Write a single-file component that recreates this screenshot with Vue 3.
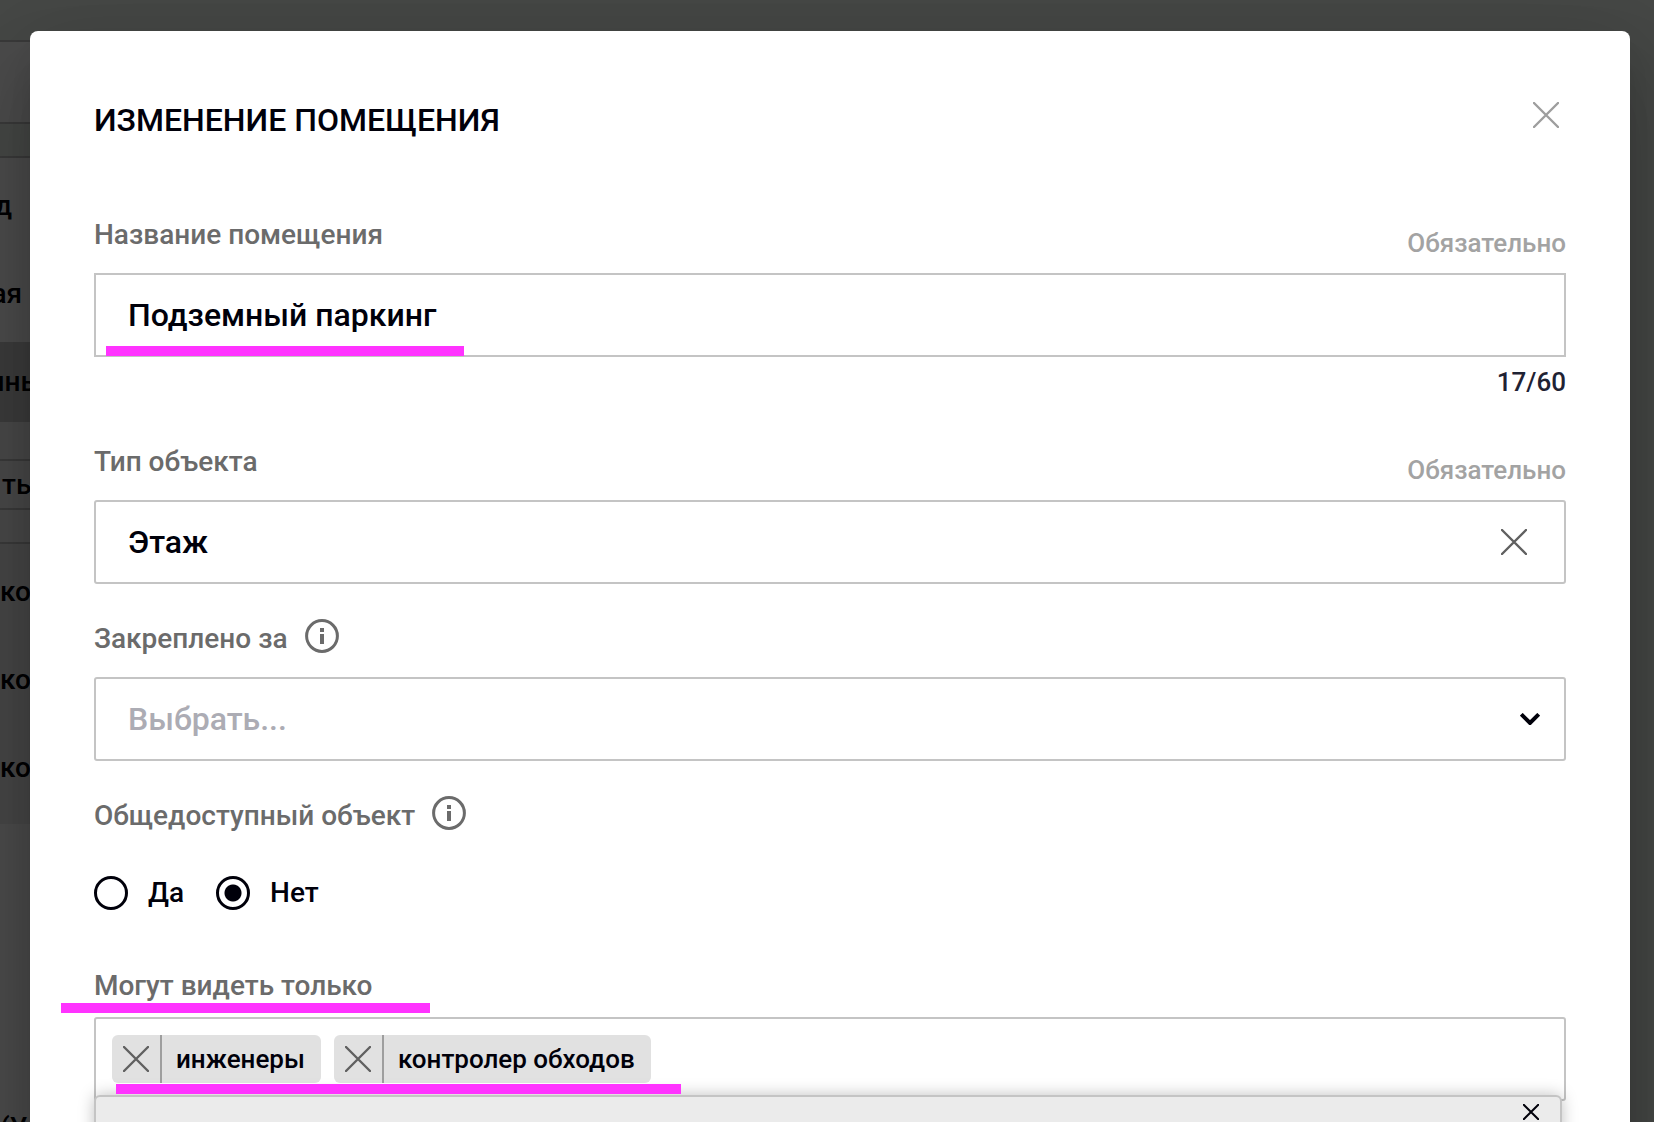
<script setup>
import { ref } from 'vue'

const name = ref('Подземный паркинг')
const kind = ref('Этаж')
const owner = ref('')
const isPublic = ref('no')
const roles = ref(['инженеры', 'контролер обходов'])

// Rows of the list behind the dialog; `end` is where the visible text stops.
const rows = [
  { text: 'д', end: 12, tone: 'upper' },
  { text: 'ая', end: 22, tone: 'upper' },
  { text: 'нны', end: 43, tone: 'current' },
]
const subRows = ['ко', 'ко', 'ко']

function removeRole(index) {
  roles.value.splice(index, 1)
}
</script>

<template>
  <div class="page">
    <aside class="backdrop-list">
      <div class="bar"></div>
      <div class="head"></div>
      <div class="gap"></div>
      <div class="rows">
        <div v-for="row in rows" :key="row.text" class="row" :class="row.tone">
          <span class="row-text" :style="{ width: row.end + 'px' }">{{ row.text }}</span>
        </div>
      </div>
      <div class="spacer"></div>
      <div class="action">ть</div>
      <div class="spacer low"></div>
      <div class="sub">
        <div v-for="(text, i) in subRows" :key="i" class="sub-row">{{ text }}</div>
      </div>
      <div class="rest">(У</div>
    </aside>

    <div class="overlay">
      <form class="modal" role="dialog" aria-labelledby="dialog-title" @submit.prevent>
        <header class="header">
          <h1 id="dialog-title" class="title">ИЗМЕНЕНИЕ ПОМЕЩЕНИЯ</h1>
          <button type="button" class="icon-button close" aria-label="Закрыть">
            <svg width="26" height="26" viewBox="0 0 26 26">
              <path d="M1 1L25 25M25 1L1 25" />
            </svg>
          </button>
        </header>

        <section class="field">
          <div class="caption">
            <label class="label" for="room-name">Название помещения</label>
            <span class="required">Обязательно</span>
          </div>
          <div class="control square">
            <input id="room-name" v-model="name" class="value" type="text" maxlength="60" />
            <span class="marker marker-name"></span>
          </div>
          <div class="counter">{{ name.length }}/60</div>
        </section>

        <section class="field">
          <div class="caption">
            <label class="label" for="room-kind">Тип объекта</label>
            <span class="required">Обязательно</span>
          </div>
          <div class="control">
            <input id="room-kind" v-model="kind" class="value" type="text" />
            <button type="button" class="icon-button clear" aria-label="Очистить" @click="kind = ''">
              <svg width="26" height="26" viewBox="0 0 26 26">
                <path d="M1 1L25 25M25 1L1 25" />
              </svg>
            </button>
          </div>
        </section>

        <section class="field">
          <div class="caption">
            <label class="label" for="room-owner">Закреплено за</label>
            <svg class="info" width="34" height="34" viewBox="0 0 34 34">
              <circle cx="17" cy="17" r="15.4" />
              <path d="M17 9v4M17 15v10" />
            </svg>
          </div>
          <div class="control">
            <select id="room-owner" v-model="owner" class="value placeholder">
              <option value="">Выбрать...</option>
            </select>
            <svg class="chevron" width="20" height="12" viewBox="0 0 20 12">
              <path d="M1.3 1.3L10 10L18.7 1.3" />
            </svg>
          </div>
        </section>

        <fieldset class="field">
          <legend class="caption">
            <span class="label">Общедоступный объект</span>
            <svg class="info" width="34" height="34" viewBox="0 0 34 34">
              <circle cx="17" cy="17" r="15.4" />
              <path d="M17 9v4M17 15v10" />
            </svg>
          </legend>
          <div class="options">
            <label class="option">
              <input v-model="isPublic" class="radio" type="radio" name="public" value="yes" />
              Да
            </label>
            <label class="option">
              <input v-model="isPublic" class="radio" type="radio" name="public" value="no" />
              Нет
            </label>
          </div>
        </fieldset>

        <section class="field">
          <div class="caption marked">
            <span class="label">Могут видеть только</span>
            <span class="marker marker-label"></span>
          </div>
          <div class="control chips">
            <span v-for="(role, i) in roles" :key="role" class="chip">
              <button type="button" class="chip-remove" :aria-label="'Убрать ' + role" @click="removeRole(i)">
                <svg width="26" height="26" viewBox="0 0 26 26">
                  <path d="M1 1L25 25M25 1L1 25" />
                </svg>
              </button>
              <span class="chip-text">{{ role }}</span>
            </span>
            <span class="marker marker-chips"></span>
            <div class="menu">
              <button type="button" class="icon-button menu-close" aria-label="Закрыть список">
                <svg width="16" height="16" viewBox="0 0 16 16">
                  <path d="M0 0L16 16M16 0L0 16" />
                </svg>
              </button>
            </div>
          </div>
        </section>
      </form>
    </div>
  </div>
</template>

<style>
body {
  margin: 0;
}
</style>

<style scoped>
* {
  box-sizing: border-box;
}

.page {
  position: relative;
  height: 100vh;
  overflow: hidden;
  background: #e9f0eb;
  color: #00000a;
  font-family: Roboto, 'Noto Sans', sans-serif;
  font-weight: 500;
}

/* list under the dialog */
.backdrop-list {
  width: 50%;
  font-size: 28px;
  line-height: 40px;
  white-space: nowrap;
}

.bar {
  height: 40px;
}

.head {
  height: 84px;
  border: solid #c4c4c4;
  border-width: 2px 0;
  background: #fff;
}

.gap {
  height: 32px;
}

.rows {
  border-top: 2px solid #c4c4c4;
  background: #fff;
}

.row {
  display: flex;
  align-items: center;
  height: 80px;
}

.row-text {
  display: flex;
  justify-content: flex-end;
}

.row.upper:first-child {
  height: 96px;
}

.row.current {
  margin-top: 8px;
  background: #c8c8c8;
}

.spacer {
  height: 37px;
  background: #f6f6f6;
}

.action {
  height: 51px;
  padding: 4px 2px;
  border: solid #c4c4c4;
  border-width: 2px 0;
  background: #f6f6f6;
}

.spacer.low {
  height: 32px;
}

.sub {
  padding: 6px 0 10px;
  border-top: 2px solid #c4c4c4;
  background: #eee;
}

.sub-row {
  height: 88px;
  padding: 22px 0;
}

.rest {
  height: 400px;
  padding-top: 284px;
  background: #fdfdfd;
}

/* dialog */
.overlay {
  position: absolute;
  inset: 0;
  padding: 31px 24px 0 30px;
  background: rgba(0, 0, 0, 0.7);
}

.modal {
  padding: 64px 64px 160px;
  border-radius: 8px;
  background: #fff;
  box-shadow:
    0 22px 30px -14px rgba(0, 0, 0, 0.2),
    0 48px 76px 6px rgba(0, 0, 0, 0.14),
    0 18px 92px 16px rgba(0, 0, 0, 0.12);
}

.header {
  display: flex;
  justify-content: space-between;
  align-items: flex-start;
  height: 116px;
  padding: 0 7px 0 0;
}

.title {
  margin: 0;
  font-size: 32px;
  font-weight: 500;
  line-height: 50px;
}

.icon-button,
.chip-remove {
  padding: 0;
  border: 0;
  background: none;
  cursor: pointer;
}

.icon-button svg,
.chip-remove svg {
  display: block;
  fill: none;
  stroke: #606060;
  stroke-width: 2.4;
  stroke-linecap: round;
}

.icon-button.close svg {
  stroke: #9e9e9e;
}

.close {
  margin-top: 7px;
}

.field {
  min-width: 0;
  margin: 0;
  padding: 0;
  border: 0;
}

.field + .field {
  margin-top: 31px;
}

.caption {
  position: relative;
  display: flex;
  align-items: center;
  width: 100%;
  height: 62px;
  padding: 0 0 14px;
  color: #6b6b6b;
}

.caption.marked {
  padding: 0;
}

.label {
  font-size: 28px;
  line-height: 40px;
}

.required {
  margin: 16px 0 0 auto;
  color: #a3a3a3;
  font-size: 26px;
  line-height: 36px;
}

.info {
  margin: 0 0 6px 17px;
  fill: none;
  stroke: #6b6b6b;
  stroke-width: 3;
}

.info path {
  stroke-width: 4;
}

.control {
  position: relative;
  display: flex;
  align-items: center;
  height: 84px;
  border: 2px solid #c4c4c4;
  border-radius: 3px;
}

.control.square {
  border-radius: 0;
}

.value {
  flex: 1;
  min-width: 0;
  height: 100%;
  padding: 0 32px;
  border: 0;
  outline: 0;
  background: none;
  appearance: none;
  color: inherit;
  font: inherit;
  font-size: 32px;
}

.placeholder {
  color: #acacb4;
}

.clear {
  margin-right: 37px;
}

.chevron {
  position: absolute;
  right: 24px;
  fill: none;
  stroke: #00000a;
  stroke-width: 4;
  pointer-events: none;
}

.counter {
  height: 50px;
  color: #1f2233;
  font-size: 26px;
  line-height: 50px;
  text-align: right;
}

.options {
  display: flex;
  gap: 32px;
  padding: 19px 0 11px;
}

.option {
  display: flex;
  align-items: center;
  gap: 20px;
  font-size: 28px;
  line-height: 40px;
}

.radio {
  width: 34px;
  height: 34px;
  margin: 0;
  border: 3px solid #00000a;
  border-radius: 50%;
  appearance: none;
}

.radio:checked {
  background: radial-gradient(circle, #00000a 8px, transparent 9px);
}

.chips {
  gap: 13px;
  padding: 0 16px;
}

.chip {
  display: flex;
  height: 48px;
  border-radius: 6px;
  background: #e1e1e1;
}

.chip-remove {
  width: 50px;
  padding: 0 11px;
  border-right: 2px solid #9e9e9e;
}

.chip-text {
  padding: 0 16px 0 14px;
  font-size: 26px;
  line-height: 48px;
}

.menu {
  position: absolute;
  top: 76px;
  left: -2px;
  right: 2px;
  display: flex;
  justify-content: flex-end;
  height: 160px;
  padding: 7px 21px;
  border: 2px solid #c4c4c4;
  border-radius: 6px;
  background: #ebebeb;
  box-shadow: 0 0 16px rgba(0, 0, 0, 0.25);
}

.menu-close {
  height: 16px;
}

.icon-button.menu-close svg {
  stroke: #00000a;
  stroke-width: 2;
}

/* highlighter strokes */
.marker {
  position: absolute;
  z-index: 1;
  height: 10px;
  background: #ff33ff;
}

.marker-name {
  bottom: -1px;
  left: 10px;
  width: 358px;
}

.marker-label {
  bottom: 4px;
  left: -33px;
  width: 369px;
}

.marker-chips {
  top: 65px;
  left: 20px;
  width: 565px;
}
</style>
